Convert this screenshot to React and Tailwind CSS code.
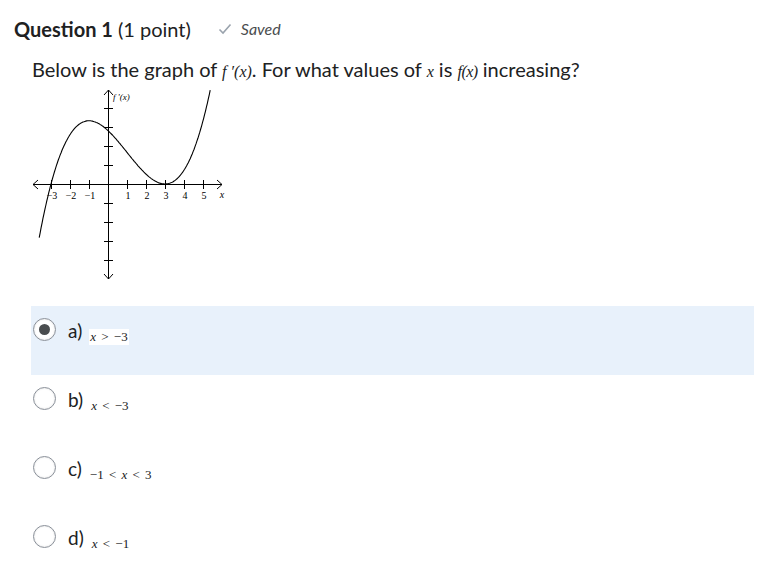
import React from 'react';

const options = [
  { key: 'a', math: <><i>x</i> &gt; −3</>, selected: true },
  { key: 'b', math: <><i>x</i> &lt; −3</> },
  { key: 'c', math: <>−1 &lt; <i>x</i> &lt; 3</> },
  { key: 'd', math: <><i>x</i> &lt; −1</> },
];

function Graph() {
  // origin inside the svg, 19px per unit
  const ox = 78;
  const oy = 97;
  const u = 19;
  const pts = [];
  for (let x = -3.62; x <= 5.42; x += 0.05) {
    const y = 0.104 * (x + 3) * (x - 3) * (x - 3);
    pts.push(`${(ox + x * u).toFixed(1)},${(oy - y * u).toFixed(1)}`);
  }
  const xt = [-3, -2, -1, 1, 2, 3, 4, 5];
  const yt = [-4, -3, -2, -1, 1, 2, 3, 4];
  return (
    <svg width="200" height="200" viewBox="0 0 200 200" className="block">
      <g stroke="#000" strokeWidth="1" fill="none" shapeRendering="crispEdges">
        <line x1="3" y1={oy + 0.5} x2="192" y2={oy + 0.5} />
        <line x1={ox + 0.5} y1="3" x2={ox + 0.5} y2="192" />
        {xt.map((t) => (
          <line key={t} x1={ox + t * u + 0.5} y1={oy - 4} x2={ox + t * u + 0.5} y2={oy + 5} />
        ))}
        {yt.map((t) => (
          <line key={t} x1={ox - 4} y1={oy - t * u + 0.5} x2={ox + 5} y2={oy - t * u + 0.5} />
        ))}
      </g>
      <g stroke="#000" strokeWidth="1" fill="none">
        <polyline points={`8,${oy - 4} 3,${oy + 0.5} 8,${oy + 5}`} />
        <polyline points={`187,${oy - 4} 192,${oy + 0.5} 187,${oy + 5}`} />
        <polyline points={`${ox - 4},8 ${ox + 0.5},3 ${ox + 5},8`} />
        <polyline points={`${ox - 4},187 ${ox + 0.5},192 ${ox + 5},187`} />
        <polyline points={pts.join(' ')} strokeWidth="1.1" />
      </g>
      <g fontFamily="'Liberation Serif', serif" fontSize="10" fill="#000">
        {xt.map((t) => (
          <text key={t} x={ox + t * u + 1} y={oy + 15} textAnchor="middle">
            {t < 0 ? `−${-t}` : t}
          </text>
        ))}
        <text x="192" y={oy + 14} fontStyle="italic" textAnchor="middle">x</text>
        <text x={ox + 5} y="13" fontStyle="italic" fontSize="9">f '(x)</text>
      </g>
    </svg>
  );
}

const serif = { fontFamily: '"Liberation Serif", serif' };

export default function App() {
  return (
    <div className="min-h-screen bg-white text-[#202122]" style={{ fontFamily: 'Lato, "Noto Sans", sans-serif' }}>
      <div className="pl-[14px] pt-[16px]">
        <div className="flex items-center h-[26px]">
          <span className="text-[20px] font-bold">Question 1</span>
          <span className="text-[20px] ml-[5px]">(1 point)</span>
          <span className="ml-[27px] flex items-center text-[16px] italic text-[#494c4e]">
            <svg width="14" height="12" viewBox="0 0 14 12" className="mr-[9px]">
              <path d="M1.5 6.5 L5 10 L12.5 1.5" stroke="#9aa3ad" strokeWidth="1.6" fill="none" />
            </svg>
            Saved
          </span>
        </div>

        <p className="mt-[14px] ml-[18px] text-[20px] leading-[26px]">
          Below is the graph of{' '}
          <span className="italic text-[16px]" style={serif}>f ′(x)</span>. For what values of{' '}
          <span className="italic text-[16px]" style={serif}>x</span> is{' '}
          <span className="italic text-[16px] tracking-[-0.5px]" style={serif}>f(x)</span> increasing?
        </p>

        <div className="ml-[16px] mt-[2px]">
          <Graph />
        </div>

        <div className="ml-[17px] mt-[19px] w-[723px]">
          {options.map((o) => (
            <div
              key={o.key}
              className={`h-[69px] flex items-start pt-[12px] pl-[2px] ${o.selected ? 'bg-[#e8f1fb]' : ''}`}
            >
              <div className="w-[23px] h-[23px] rounded-full border border-[#8a9099] bg-white flex items-center justify-center shadow-[inset_0_0_2px_rgba(0,0,0,0.15)]">
                {o.selected && <div className="w-[11px] h-[11px] rounded-full bg-[#494c4e]" />}
              </div>
              <span className="ml-[12px] text-[19px] leading-[26px]">{o.key})</span>
              <span
                className="ml-[7px] mt-[11px] px-[1px] text-[13px] leading-[16px] bg-white [word-spacing:2px]"
                style={serif}
              >
                {o.math}
              </span>
            </div>
          ))}
        </div>
      </div>
    </div>
  );
}
